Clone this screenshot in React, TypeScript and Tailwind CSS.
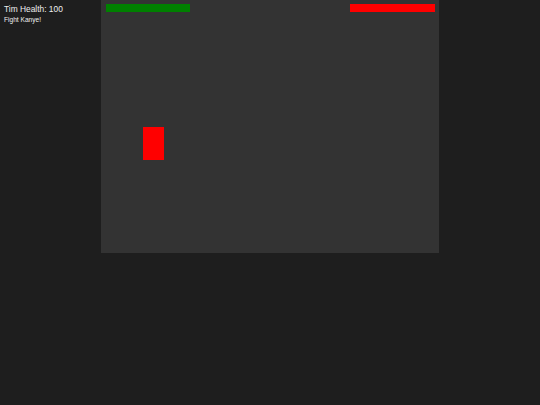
const App = () => {
  const timHealth = 100;
  const kanyeHealth = 100;

  return (
    <div className="relative flex h-[405px] w-full justify-center bg-[#1e1e1e] font-['Liberation_Sans',Arial,sans-serif]">
      {/* hud */}
      <div className="absolute left-[4px] top-[3.5px] text-[#eeeeee]">
        <div className="text-[8.4px] leading-[10px]">Tim Health: {timHealth}</div>
        <div className="mt-[2.5px] text-[6.6px] leading-[8px]">Fight Kanye!</div>
      </div>

      {/* arena */}
      <div className="relative h-[253px] w-[338px] bg-[#333333]">
        <div
          className="absolute left-[5px] top-[4px] h-[8px] bg-[#008000]"
          style={{ width: (84 * timHealth) / 100 }}
        />
        <div
          className="absolute right-[4px] top-[4px] h-[8px] bg-[#ff0000]"
          style={{ width: (85 * kanyeHealth) / 100 }}
        />
        <div className="absolute left-[42px] top-[127px] h-[33px] w-[21px] bg-[#ff0000]" />
      </div>
    </div>
  );
};

export default App;
